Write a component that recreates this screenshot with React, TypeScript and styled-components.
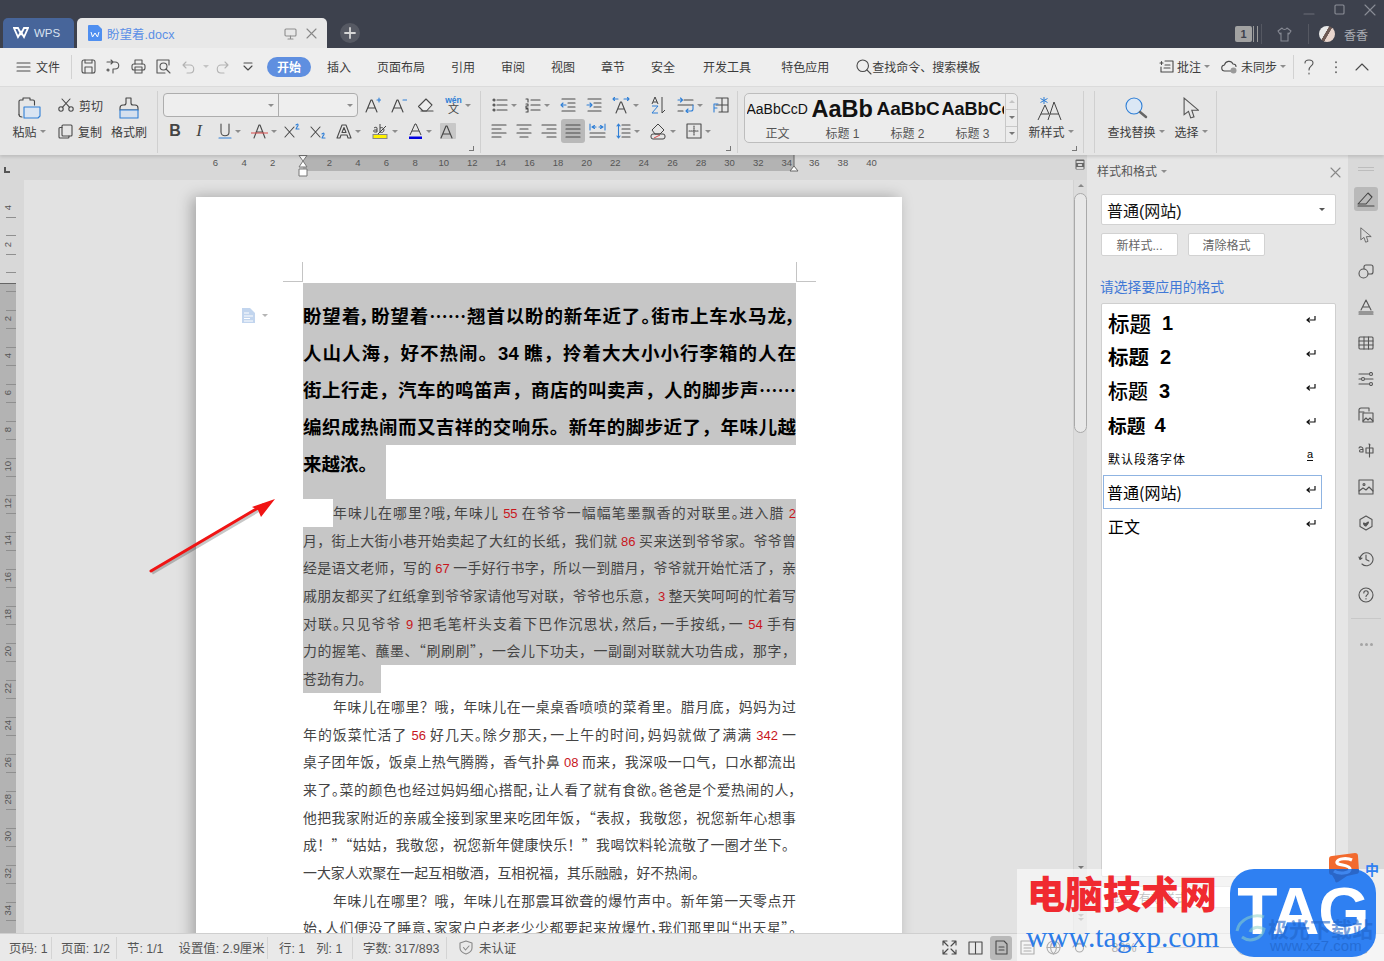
import React from 'react';
import styled, { createGlobalStyle } from 'styled-components';

const GlobalStyle = createGlobalStyle`
    html, body {
        margin: 0;
        padding: 0;
        background: #e2e2e2;
        font-family: "Liberation Sans", "Noto Sans CJK SC", sans-serif;
    }
    * { box-sizing: border-box; }
    svg { display: block; flex: none; }
`;

const Shell = styled.div`
    position: relative;
    width: 1384px;
    height: 961px;
    overflow: hidden;
    display: flex;
    flex-direction: column;
    color: #3a3a3a;
`;

/* ---------- title bar ---------- */
const TitleBar = styled.div`
    height: 48px;
    flex: none;
    background: #3d414d;
    display: flex;
    align-items: flex-end;
    padding-left: 3px;
`;
const WpsTab = styled.div`
    width: 71px;
    height: 30px;
    margin-right: 3px;
    border-radius: 5px 5px 0 0;
    background: #47659a;
    color: #d9e2f0;
    font-size: 11.5px;
    display: flex;
    align-items: center;
    gap: 5px;
    padding-left: 10px;
`;
const DocTab = styled.div`
    width: 250px;
    height: 30px;
    border-radius: 5px 5px 0 0;
    background: #e8e8e8;
    display: flex;
    align-items: center;
    padding: 0 10px 0 11px;
    color: #5a8fe6;
    font-size: 12.5px;
    gap: 5px;
`;
const DocTabName = styled.span`
    flex: 1;
`;
const TabCloseSlot = styled.div`
    margin-left: 4px;
`;
const NewTab = styled.div`
    width: 20px;
    height: 20px;
    margin: 0 0 5px 13px;
    border-radius: 50%;
    background: #565963;
    display: flex;
    align-items: center;
    justify-content: center;
`;
const TitleRight = styled.div`
    margin-left: auto;
    height: 48px;
    display: flex;
    flex-direction: column;
    align-items: flex-end;
`;
const WindowControls = styled.div`
    display: flex;
    align-items: center;
    gap: 19px;
    height: 18px;
    padding: 1px 8px 0 0;
    margin-bottom: 6px;
`;
const UserRow = styled.div`
    display: flex;
    align-items: center;
    height: 20px;
    padding-right: 16px;
    color: #a8abb2;
    font-size: 12px;
`;
const CountBadge = styled.div`
    width: 17px;
    height: 16px;
    border-radius: 2px;
    background: #a2a2a2;
    color: #3d414d;
    font-size: 11px;
    font-weight: 700;
    display: flex;
    align-items: center;
    justify-content: center;
    margin-right: 1px;
`;
const BadgeStripes = styled.div`
    width: 5px;
    height: 16px;
    border-left: 1px solid #9a9a9a;
    border-right: 1px solid #9a9a9a;
    margin-right: 3px;
`;
const TitleDivider = styled.div`
    width: 1px;
    height: 20px;
    background: #555862;
`;
const ShirtSlot = styled.div`
    width: 46px;
    display: flex;
    justify-content: center;
`;
const Avatar = styled.div`
    width: 16px;
    height: 16px;
    border-radius: 50%;
    margin: 0 9px 0 10px;
    background: linear-gradient(120deg, #e9e9e9 40%, #6d5a55 42%, #6d5a55 55%, #e8d5cd 57%);
`;

/* ---------- menu bar ---------- */
const MenuBar = styled.div`
    height: 39px;
    flex: none;
    background: #eeeeee;
    border-bottom: 1px solid #dcdcdc;
    display: flex;
    align-items: center;
    padding: 0 0 1px 16px;
    font-size: 12px;
    color: #3c3c3c;
`;
const FileButton = styled.div`
    display: flex;
    align-items: center;
    gap: 5px;
    width: 55px;
`;
const MenuDivider = styled.div`
    width: 1px;
    height: 24px;
    background: #d2d2d2;
`;
const QuickTools = styled.div`
    display: flex;
    align-items: center;
    width: 195px;
    padding-left: 4px;
`;
const QuickCell = styled.div<{ $w?: number }>`
    width: ${(p) => p.$w ?? 25}px;
    display: flex;
    justify-content: center;
`;
const ActivePill = styled.div`
    width: 44px;
    height: 20px;
    border-radius: 10px;
    background: #5f8fe0;
    color: #fff;
    font-weight: 700;
    display: flex;
    align-items: center;
    justify-content: center;
    margin-right: 16px;
`;
const MenuItem = styled.div<{ $gap?: number }>`
    margin-right: ${(p) => p.$gap ?? 26}px;
`;
const SearchHint = styled.div`
    display: flex;
    align-items: center;
    gap: 0;
`;
const MenuRight = styled.div`
    margin-left: auto;
    display: flex;
    align-items: center;
    padding-right: 8px;
`;
const MenuAction = styled.div<{ $w: number }>`
    width: ${(p) => p.$w}px;
    display: flex;
    align-items: center;
    gap: 3px;
`;
const CollapseSlot = styled.div<{ $w: number }>`
    width: ${(p) => p.$w}px;
    display: flex;
    justify-content: center;
`;

/* ---------- ribbon ---------- */
const Ribbon = styled.div`
    height: 68px;
    flex: none;
    background: #e6e6e6;
    display: flex;
    position: relative;
    z-index: 2;
    box-shadow: 0 2px 3px rgba(0, 0, 0, 0.12);
    font-size: 12px;
    color: #3c3c3c;
`;
const RibbonGroup = styled.div<{ $w: number; $pad?: number }>`
    position: relative;
    width: ${(p) => p.$w}px;
    margin: 4px 0 2px;
    padding-left: ${(p) => p.$pad ?? 0}px;
    border-right: 1px solid #d0d0d0;
    display: flex;
    flex: none;
`;
const GroupStack = styled.div`
    display: flex;
    flex-direction: column;
    gap: 2px;
    padding-top: 2px;
`;
const GroupCorner = styled.div`
    position: absolute;
    right: 6px;
    bottom: 2px;
    width: 5px;
    height: 5px;
    border-right: 1px solid #777;
    border-bottom: 1px solid #777;
`;
const ToolRow = styled.div`
    display: flex;
    align-items: center;
    height: 24px;
`;
const Tool = styled.div<{ $w: number; $active?: boolean }>`
    width: ${(p) => p.$w}px;
    height: 24px;
    display: flex;
    align-items: center;
    justify-content: center;
    gap: 3px;
    flex: none;
    border-radius: 3px;
    background: ${(p) => (p.$active ? '#b9b9b9' : 'transparent')};
`;
const ShadedBox = styled.div`
    width: 16px;
    height: 16px;
    background: #c8c8c8;
    border-radius: 1px;
`;
const Caret = styled.span<{ $color?: string }>`
    width: 0;
    height: 0;
    flex: none;
    border-left: 3px solid transparent;
    border-right: 3px solid transparent;
    border-top: 3px solid ${(p) => p.$color ?? '#8d8d8d'};
`;
const BigTool = styled.div<{ $w: number; $ml?: number }>`
    width: ${(p) => p.$w}px;
    margin-left: ${(p) => p.$ml ?? 0}px;
    display: flex;
    flex-direction: column;
    align-items: center;
    flex: none;
    padding-top: 6px;
    height: 60px;
`;
const BigLabel = styled.div`
    margin-top: auto;
    padding-bottom: 11px;
    display: flex;
    align-items: center;
    gap: 3px;
    white-space: nowrap;
`;
const ClipColumn = styled.div`
    display: flex;
    flex-direction: column;
    margin-left: 10px;
    width: 48px;
    padding-top: 1px;
`;
const ClipItem = styled.div`
    height: 26px;
    display: flex;
    align-items: center;
    gap: 5px;
`;
const FontBox = styled.div`
    width: 195px;
    height: 24px;
    margin-right: 2px;
    border: 1px solid #adadad;
    border-radius: 4px;
    background: #eeeeee;
    display: flex;
`;
const FontPart = styled.div<{ $w: number }>`
    width: ${(p) => p.$w}px;
    display: flex;
    align-items: center;
    justify-content: flex-end;
    padding-right: 4px;
    border-right: 1px solid #adadad;
    &:last-child { border-right: none; }
`;
const BoldMark = styled.span`
    font-size: 16px;
    font-weight: 700;
    color: #444;
`;
const ItalicMark = styled.span`
    font-family: "Liberation Serif", serif;
    font-size: 17px;
    font-style: italic;
    color: #444;
`;
const PinyinStack = styled.div`
    display: flex;
    flex-direction: column;
    align-items: center;
    width: 16px;
`;
const PinyinTop = styled.span`
    font-size: 8.5px;
    line-height: 8px;
    font-weight: 700;
    color: #2f7fd6;
`;
const PinyinChar = styled.span`
    font-size: 11px;
    line-height: 11px;
    color: #444;
`;
const Gallery = styled.div`
    width: 274px;
    height: 50px;
    margin: 2px 0 0 6px;
    border: 1px solid #bdbdbd;
    border-radius: 5px;
    background: #ececec;
    display: flex;
`;
const GalleryCell = styled.div`
    width: 65px;
    flex: none;
    display: flex;
    flex-direction: column;
    align-items: center;
    overflow: hidden;
`;
const GalleryPreview = styled.div<{ $size: number; $bold?: boolean }>`
    height: 30px;
    width: 62px;
    overflow: hidden;
    display: flex;
    align-items: center;
    white-space: nowrap;
    color: #111;
    font-size: ${(p) => p.$size}px;
    font-weight: ${(p) => (p.$bold ? 700 : 400)};
`;
const GalleryName = styled.div`
    font-size: 12px;
    color: #555;
`;
const GalleryScroll = styled.div`
    width: 12px;
    margin-left: auto;
    border-left: 1px solid #c8c8c8;
    display: flex;
    flex-direction: column;
`;
const GalleryArrow = styled.div`
    flex: 1;
    display: flex;
    align-items: center;
    justify-content: center;
    border-bottom: 1px solid #c8c8c8;
    &:last-child { border-bottom: none; }
`;

/* ---------- work area ---------- */
const Workspace = styled.div`
    flex: 1;
    min-height: 0;
    display: flex;
`;
const EditorPane = styled.div`
    width: 1087px;
    flex: none;
    display: flex;
    flex-direction: column;
`;
const HRuler = styled.div`
    height: 25px;
    flex: none;
    background: #d8d8d8;
    display: flex;
    font-size: 9.5px;
    color: #555;
`;
const RulerLead = styled.div`
    width: 303px;
    height: 16px;
    padding-right: 16px;
    display: flex;
    justify-content: flex-end;
    position: relative;
`;
const RulerBand = styled.div`
    width: 491px;
    height: 16px;
    padding-left: 12px;
    background: #b3b3b3;
    display: flex;
    position: relative;
`;
const RulerTail = styled.div`
    flex: 1;
    height: 16px;
    padding-left: 6px;
    display: flex;
`;
const RulerCell = styled.span`
    width: 28.6px;
    flex: none;
    line-height: 16px;
    text-align: center;
`;
const TabStop = styled.div`
    position: absolute;
    left: 4px;
    top: 12px;
    width: 6px;
    height: 6px;
    border-left: 2px solid #555;
    border-bottom: 2px solid #555;
`;
const IndentMarker = styled.div`
    position: absolute;
    left: -6px;
    top: 0;
`;
const RightMarker = styled.div`
    position: absolute;
    right: -5px;
    top: 0;
`;
const RulerToggle = styled.div`
    width: 14px;
    flex: none;
    padding: 4px 0 0 2px;
`;
const EditorMain = styled.div`
    flex: 1;
    min-height: 0;
    display: flex;
`;
const VRuler = styled.div`
    width: 24px;
    flex: none;
    background: #d8d8d8;
    display: flex;
    flex-direction: column;
    overflow: hidden;
    font-size: 9.5px;
    color: #555;
`;
const VRulerTop = styled.div`
    width: 16px;
    height: 103px;
    flex: none;
    padding-top: 18px;
`;
const VRulerBottom = styled.div`
    width: 16px;
    flex: 1;
    background: #b3b3b3;
    border-top: 1px solid #666;
    padding-top: 7px;
`;
const VSlot = styled.div<{ $h?: number }>`
    position: relative;
    height: ${(p) => p.$h ?? 18.5}px;
    display: flex;
    align-items: center;
    justify-content: center;
    &::before {
        content: '';
        position: absolute;
        top: 0;
        left: 6px;
        width: 10px;
        height: 1px;
        background: ${(p) => (p.$h ? 'transparent' : '#8f8f8f')};
    }
`;
const VNumber = styled.span`
    writing-mode: vertical-rl;
    transform: rotate(180deg);
    line-height: 10px;
`;
const DocArea = styled.div`
    flex: 1;
    min-width: 0;
    background: #e2e2e2;
    padding: 17px 0 0 172px;
    overflow: hidden;
`;
const Page = styled.div`
    position: relative;
    width: 706px;
    min-height: 800px;
    padding: 86px 106px 0 107px;
    background: #fff;
    box-shadow: -4px 0 14px rgba(0, 0, 0, 0.28);
    font-family: "Noto Sans CJK SC", "Liberation Sans", sans-serif;
`;
const CropMark = styled.div<{ $side: 'left' | 'right' }>`
    position: absolute;
    top: 65px;
    ${(p) => (p.$side === 'left' ? 'left: 106px;' : 'right: 105px;')}
    width: 1px;
    height: 20px;
    background: #c4c4c4;
    &::after {
        content: '';
        position: absolute;
        bottom: 0;
        ${(p) => (p.$side === 'left' ? 'right: 0;' : 'left: 0;')}
        width: 20px;
        height: 1px;
        background: #c4c4c4;
    }
`;
const MarginIcon = styled.div`
    position: absolute;
    left: 46px;
    top: 111px;
    display: flex;
    align-items: center;
    gap: 7px;
`;
const HeadingBlock = styled.div`
    background: #c6c6c6;
    padding-top: 13.5px;
`;
const HeadingLine = styled.div<{ $compact?: boolean }>`
    height: 37px;
    line-height: 37px;
    font-size: 18.5px;
    font-weight: 700;
    color: #000;
    text-align: justify;
    text-align-last: justify;
    font-feature-settings: ${(p) => (p.$compact ? '"palt"' : 'normal')};
    overflow: hidden;
`;
const HeadingTail = styled(HeadingLine)`
    width: 83px;
    height: 54.5px;
    background: #c6c6c6;
    text-align-last: left;
`;
const HeadingNumber = styled.span`
    font-family: "Liberation Sans", sans-serif;
`;
const BodyLine = styled.div<{ $selected?: boolean; $first?: boolean; $last?: boolean; $compact?: boolean }>`
    height: 27.7px;
    line-height: 26px;
    padding-bottom: 1.7px;
    font-size: 13.9px;
    color: #444;
    overflow: hidden;
    text-align: justify;
    text-align-last: ${(p) => (p.$last ? 'left' : 'justify')};
    font-feature-settings: ${(p) => (p.$compact ? '"palt"' : 'normal')};
    padding-left: ${(p) => (p.$first ? 30 : 0)}px;
    padding-right: ${(p) => (p.$last && p.$selected ? 9 : 0)}px;
    width: ${(p) => (p.$last && p.$selected ? 'fit-content' : 'auto')};
    background: ${(p) => (p.$selected ? '#c6c6c6' : 'transparent')};
    background-clip: ${(p) => (p.$first ? 'padding-box' : 'border-box')};
    box-shadow: ${(p) => (p.$first && p.$selected ? 'inset 30px 0 0 #fff' : 'none')};
`;
const RedNumber = styled.span`
    color: #c8161d;
    font-family: "Liberation Sans", sans-serif;
    font-size: 13px;
`;
const Scrollbar = styled.div`
    width: 14px;
    flex: none;
    background: #dcdcdc;
    display: flex;
    flex-direction: column;
    align-items: center;
    padding-top: 4px;
    border-left: 1px solid #d2d2d2;
`;
const ScrollThumb = styled.div`
    width: 13px;
    height: 240px;
    margin-top: 6px;
    border: 1px solid #a9a9a9;
    border-radius: 7px;
    background: #e8e8e8;
`;
const ScrollArrow = styled(Caret)<{ $up?: boolean }>`
    display: block;
    transform: ${(p) => (p.$up ? 'rotate(180deg)' : 'none')};
    margin-bottom: ${(p) => (p.$up ? 0 : 1)}px;
`;
const ScrollBottom = styled.div`
    margin-top: auto;
    padding-bottom: 11px;
    display: flex;
    flex-direction: column;
    align-items: center;
`;
const ScrollGap = styled.div`
    height: 44px;
`;

/* ---------- styles panel ---------- */
const SidePanel = styled.div`
    width: 261px;
    flex: none;
    background: #e6e6e6;
    padding: 0 12px 0 14px;
    display: flex;
    flex-direction: column;
    font-size: 12px;
`;
const PanelHead = styled.div`
    height: 39px;
    padding-top: 9px;
    margin-left: -4px;
    display: flex;
    align-items: flex-start;
    gap: 4px;
    color: #555;
`;
const PanelTitle = styled.div`
    line-height: 16px;
`;
const PanelCaret = styled(Caret)`
    margin-top: 6px;
`;
const PanelClose = styled.div`
    margin: 3px -5px 0 auto;
`;
const StyleSelect = styled.div`
    height: 31px;
    flex: none;
    background: #fff;
    border: 1px solid #d2d2d2;
    border-radius: 2px;
    display: flex;
    align-items: center;
    justify-content: space-between;
    padding: 0 10px 0 5px;
    font-size: 16px;
    color: #111;
`;
const PanelButtons = styled.div`
    display: flex;
    gap: 10px;
    margin-top: 8px;
`;
const PanelButton = styled.div`
    width: 77px;
    height: 23px;
    background: #fff;
    border: 1px solid #d2d2d2;
    border-radius: 2px;
    display: flex;
    align-items: center;
    justify-content: center;
    color: #666;
`;
const PanelLink = styled.div`
    margin: 23px 0 0 -1px;
    height: 17px;
    line-height: 17px;
    font-size: 13.8px;
    color: #3f78d6;
    white-space: nowrap;
`;
const StyleList = styled.div`
    margin-top: 7px;
    height: 574px;
    flex: none;
    background: #fff;
    border: 1px solid #cfcfcf;
    border-radius: 2px;
    padding: 1px 0 0 1px;
`;
const StyleRow = styled.div<{ $selected?: boolean }>`
    width: 219px;
    height: 34px;
    padding: 0 5px 0 ${(p) => (p.$selected ? 3 : 4)}px;
    display: flex;
    align-items: center;
    border: 1px solid ${(p) => (p.$selected ? '#8fb4e2' : 'transparent')};
    color: #000;
`;
const StyleName = styled.span<{ $size: number; $bold?: boolean; $spaced?: boolean }>`
    font-family: "Noto Sans CJK SC", sans-serif;
    font-size: ${(p) => p.$size}px;
    font-weight: ${(p) => (p.$bold ? 700 : 500)};
    letter-spacing: ${(p) => (p.$spaced ? '1px' : '0')};
    white-space: pre;
`;
const PlainName = styled(StyleName)`
    font-weight: 400;
`;
const StyleDigit = styled.span<{ $gap: number }>`
    margin: 3px 0 0 ${(p) => p.$gap}px;
    font-size: 20px;
    font-weight: 700;
`;
const ParaMark = styled.div`
    margin-left: auto;
    align-self: flex-start;
    margin-top: 10px;
`;
const CharMark = styled.span`
    margin-left: auto;
    align-self: flex-start;
    margin-top: 7px;
    margin-right: 3px;
    font-size: 11px;
    line-height: 11px;
    border-bottom: 1px solid #111;
`;
const ShowSelect = styled.div`
    height: 22px;
    margin-top: 9px;
    background: #fff;
    border: 1px solid #d8d8d8;
    padding-left: 6px;
    display: flex;
    align-items: center;
    color: #777;
`;
const Rail = styled.div`
    width: 36px;
    flex: none;
    background: #d9d9d9;
    display: flex;
    flex-direction: column;
    align-items: center;
    padding-top: 12px;
`;
const RailGrip = styled.div`
    width: 16px;
    height: 4px;
    border-top: 1px solid #bdbdbd;
    border-bottom: 1px solid #bdbdbd;
    margin-bottom: 16px;
`;
const RailButton = styled.div<{ $active?: boolean }>`
    width: 24px;
    height: 24px;
    margin-bottom: 12px;
    border-radius: 3px;
    display: flex;
    align-items: center;
    justify-content: center;
    background: ${(p) => (p.$active ? '#b9b9b9' : 'transparent')};
    color: #555;
`;
const RailRule = styled.div`
    width: 30px;
    height: 1px;
    background: #c8c8c8;
    margin: -1px 0 24px;
`;
const RailDots = styled.div`
    display: flex;
    gap: 2px;
`;
const RailDot = styled.span`
    width: 3px;
    height: 3px;
    border-radius: 50%;
    background: #a4a4a4;
`;

/* ---------- status bar ---------- */
const StatusBar = styled.div`
    height: 28px;
    flex: none;
    background: #e9e9e9;
    border-top: 1px solid #cfcfcf;
    display: flex;
    align-items: center;
    font-size: 12.4px;
    color: #555;
    position: relative;
    z-index: 2;
`;
const StatusCell = styled.div<{ $w: number; $ruled?: boolean; $gap?: number; $pad?: number }>`
    width: ${(p) => p.$w}px;
    height: 22px;
    display: flex;
    align-items: center;
    gap: ${(p) => p.$gap ?? 15}px;
    padding-left: ${(p) => p.$pad ?? 9}px;
    white-space: nowrap;
    border-right: 1px solid ${(p) => (p.$ruled === false ? 'transparent' : '#d4d4d4')};
`;
const StatusTools = styled.div`
    margin-left: auto;
    display: flex;
    align-items: center;
    padding-right: 11px;
    gap: 4px;
`;
const ViewButton = styled.div<{ $active?: boolean }>`
    width: 22px;
    height: 24px;
    border-radius: 3px;
    display: flex;
    align-items: center;
    justify-content: center;
    background: ${(p) => (p.$active ? '#b9b9b9' : 'transparent')};
`;
const ZoomValue = styled.div`
    width: 40px;
    margin-left: 10px;
    text-align: center;
`;
const ZoomTrack = styled.div`
    position: relative;
    width: 177px;
    height: 1px;
    margin: 0 3px;
    background: #aaa;
    &::after {
        content: '';
        position: absolute;
        left: 86px;
        top: -5px;
        width: 11px;
        height: 11px;
        border: 1px solid #777;
        border-radius: 50%;
        background: #eee;
    }
`;

/* ---------- overlays ---------- */
const ArrowOverlay = styled.div`
    position: absolute;
    left: 145px;
    top: 492px;
    z-index: 5;
`;
const Watermark = styled.div`
    position: absolute;
    left: 1017px;
    top: 869px;
    width: 367px;
    height: 92px;
    z-index: 5;
    background: rgba(255, 255, 255, 0.55);
`;
const WatermarkTitle = styled.div`
    position: absolute;
    left: 10px;
    top: -3px;
    font-family: "Noto Sans CJK SC", sans-serif;
    font-size: 38px;
    line-height: 52px;
    font-weight: 900;
    color: #f02a30;
    white-space: nowrap;
`;
const WatermarkUrl = styled.div`
    position: absolute;
    left: 9px;
    top: 50px;
    font-family: "Liberation Serif", serif;
    font-size: 29.5px;
    line-height: 36px;
    color: #2d7ce8;
    white-space: nowrap;
`;
const TagBox = styled.div`
    position: absolute;
    left: 213px;
    top: 0;
    width: 146px;
    height: 88px;
    border-radius: 24px;
    background: #2f80f2;
    color: #fff;
    font-family: "Liberation Sans", sans-serif;
    font-size: 66px;
    font-weight: 700;
    line-height: 84px;
    text-align: center;
    letter-spacing: -1px;
    overflow: hidden;
`;
const TagCaption = styled.div`
    position: absolute;
    left: 38px;
    top: 46px;
    font-family: "Noto Sans CJK SC", sans-serif;
    font-size: 21px;
    line-height: 26px;
    font-weight: 700;
    letter-spacing: 0;
    color: rgba(32, 100, 200, 0.6);
    white-space: nowrap;
`;
const TagSite = styled.div`
    position: absolute;
    left: 40px;
    top: 68px;
    font-size: 15px;
    line-height: 18px;
    font-weight: 400;
    letter-spacing: 0;
    color: rgba(32, 100, 200, 0.7);
    white-space: nowrap;
`;
const TagSwirl = styled.div`
    position: absolute;
    left: 4px;
    top: 42px;
`;
const SogouMark = styled.div`
    position: absolute;
    left: 1326px;
    top: 853px;
    z-index: 6;
`;
const ImeLabel = styled.div`
    position: absolute;
    left: 1365px;
    top: 860px;
    z-index: 6;
    font-family: "Noto Sans CJK SC", sans-serif;
    font-size: 14px;
    line-height: 18px;
    font-weight: 700;
    color: #2f80f2;
`;

/* ---------- drawings ---------- */
type IcoProps = { w?: number; h?: number; c?: string; sw?: number; children: React.ReactNode };
const Ico = ({ w = 18, h = 18, c = '#4a4a4a', sw = 1.1, children }: IcoProps) => (
    <svg width={w} height={h} viewBox={`0 0 ${w} ${h}`} fill="none" stroke={c} strokeWidth={sw} strokeLinecap="round" strokeLinejoin="round">
        {children}
    </svg>
);
const Blue = '#2f7fd6';

const Lines = ({ rows }: { rows: [number, number, number][] }) => (
    <>{rows.map(([x1, x2, y], i) => <path key={i} d={`M${x1} ${y}H${x2}`} />)}</>
);

const IconBullets = () => (
    <Ico w={16} h={16}><circle cx="2" cy="3" r="1" /><circle cx="2" cy="8" r="1" /><circle cx="2" cy="13" r="1" /><Lines rows={[[5, 15, 3], [5, 15, 8], [5, 15, 13]]} /></Ico>
);
const IconNumbers = () => (
    <Ico w={16} h={16}><path d="M1 2h2v3M1 7h2v2H1v2h2M1 12h2v3H1" /><Lines rows={[[6, 15, 3], [6, 15, 8], [6, 15, 13]]} /></Ico>
);
const IconIndent = ({ out }: { out?: boolean }) => (
    <Ico w={16} h={16}><Lines rows={[[2, 15, 2], [8, 15, 6], [8, 15, 10], [2, 15, 14]]} /><g stroke={Blue}><path d={out ? 'M6 8H1M3 6L1 8l2 2' : 'M1 8h5M4 6l2 2-2 2'} /></g></Ico>
);
const IconAlign = ({ rows }: { rows: [number, number, number][] }) => (
    <Ico w={16} h={16}><Lines rows={rows} /></Ico>
);

const IconPaste = () => (
    <Ico w={23} h={22} c="#444">
        <path d="M1 17.500V4.500A1.500 1.500 0 0 1 2.500 3H5V1h7v2h3a1.500 1.500 0 0 1 1.500 1.500V8" />
        <path d="M1 17.500c0 1.500 1 2.500 3 2.500" />
        <path d="M6 10h16v9l-2 2H6z" fill="#d9e4f2" stroke={Blue} />
    </Ico>
);
const IconScissors = () => (
    <Ico w={16} h={14}><circle cx="3" cy="11" r="2.2" /><circle cx="13" cy="11" r="2.2" /><path d="M4.400 9.400L12 1M11.600 9.400L4 1" /></Ico>
);
const IconCopy = () => (
    <Ico w={15} h={15}><rect x="4" y="1" width="10" height="11" rx="1" /><path d="M4 3.500H2a1 1 0 0 0-1 1V13a1 1 0 0 0 1 1h8a1 1 0 0 0 1-1v-1" /></Ico>
);
const IconBrush = () => (
    <Ico w={22} h={22} c="#444">
        <path d="M8 1h5v5c0 1 1 2 2 2h2c2 0 3 1 3 3v2H2v-2c0-2 1-3 3-3h1c1 0 2-1 2-2z" />
        <rect x="2" y="13" width="18" height="8" fill="#d5e0ee" stroke={Blue} />
    </Ico>
);
const IconFontA = ({ sub, c = '#444' }: { sub?: React.ReactNode; c?: string }) => (
    <Ico w={16} h={16} c={c}><path d="M1 15L6 3h1l5 12M3 11h7" />{sub}</Ico>
);
const IconEraser = () => (
    <Ico w={17} h={16}><path d="M6 14L1.500 9.500 9 2l6 6-5.500 6z" fill="#eee" /><path d="M4 14h12" /></Ico>
);
const IconUnderline = () => (
    <Ico w={14} h={16}><path d="M3 1v8c0 5 8 5 8 0V1" /><path d="M1 15h12" stroke={Blue} /></Ico>
);
const IconStrike = () => (
    <Ico w={17} h={16}><path d="M3 15L8 2h1l5 13M5 9h7" /><path d="M0 10h17" stroke="#d84a4a" /></Ico>
);
const IconSup = ({ sub }: { sub?: boolean }) => (
    <Ico w={17} h={16}><path d="M1 4l9 10M10 4L1 14" /><path d={sub ? 'M12 11c2-2 3 0 1 2l-1 2h3' : 'M12 2c2-2 3 0 1 2l-1 2h3'} stroke={Blue} /></Ico>
);
const IconOutlineA = () => (
    <Ico w={16} h={16}><path d="M1 15L6 2h4l5 13h-3l-1-3H5l-1 3zM6 9.500h4L8 4.500z" /></Ico>
);
const IconHighlight = () => (
    <svg width="17" height="17" viewBox="0 0 17 17" fill="none" stroke="#444">
        <path d="M2 5c1-1 3-1 3 0v4H3c-2 0-2-2 0-2h2M8 1v8c2 1 4 0 4-2s-2-3-4-2" />
        <path d="M6 11L14 3" />
        <rect x="1" y="11.500" width="14" height="4" fill="#fff200" stroke="#888" />
    </svg>
);
const IconColorA = () => (
    <svg width="15" height="17" viewBox="0 0 15 17" fill="none" stroke="#444">
        <path d="M2 12L7 1h1l5 11M4 8h7" />
        <rect x="1" y="13.500" width="13" height="2.500" fill="#0000e0" stroke="none" />
    </svg>
);
const IconTextDir = () => (
    <Ico w={18} h={18}><path d="M4 17L8.500 6h1L14 17M6 13h6" /><g stroke={Blue}><path d="M1 3h5M2.500 1.500L1 3l1.500 1.500M12 3h5M15.500 1.500L17 3l-1.500 1.500" /></g></Ico>
);
const IconSort = () => (
    <svg width="15" height="18" viewBox="0 0 15 18" fill="none" strokeWidth="1">
        <path d="M1 8l3-7 3 7M2 6h4" stroke="#444" />
        <path d="M1 10h6l-6 7h6" stroke={Blue} />
        <path d="M11 1v16M11 17l3-3" stroke="#444" />
    </svg>
);
const IconWrap = () => (
    <Ico w={17} h={16}><path d="M7 3h9M1 8h15M1 14h5" /><g stroke={Blue}><path d="M1 3h4M3.500 1L5.500 3 3.500 5M16 8v4a2 2 0 0 1-2 2H9M11 12l-2 2 2 2" /></g></Ico>
);
const IconTableLeft = () => (
    <Ico w={16} h={16}><path d="M3 1h12v14H6M9 1v14M3 8h12" /><path d="M1 7v8M1 7h4M1 11h3" stroke={Blue} /></Ico>
);
const IconSpread = () => (
    <Ico w={17} h={16}><path d="M1 10h15M1 14h15" /><g stroke={Blue}><path d="M1 1v6M16 1v6M3 4h4M5.500 2.500L3 4l2.500 1.500M10 4h4M11.500 2.500L14 4l-2.500 1.500" /></g></Ico>
);
const IconLineHeight = () => (
    <Ico w={15} h={16}><Lines rows={[[6, 14, 2], [6, 14, 6], [6, 14, 10], [6, 14, 14]]} /><path d="M2.500 1v14M1 3l1.500-2L4 3M1 13l1.500 2L4 13" stroke={Blue} /></Ico>
);
const IconFill = () => (
    <svg width="17" height="18" viewBox="0 0 17 18" fill="none" stroke="#444">
        <path d="M2 8l6-6 6 6-4 4H5z" />
        <rect x="1" y="12" width="14" height="5" rx="2" />
        <path d="M4 16l6-3" stroke="#d84a4a" />
    </svg>
);
const IconBorders = () => (
    <Ico w={16} h={16}><rect x="1" y="1" width="14" height="14" /><path d="M8 3v10M3 8h10" strokeDasharray="1 1" /></Ico>
);
const IconNewStyle = () => (
    <svg width="28" height="24" viewBox="0 0 28 24" fill="none" stroke="#444">
        <path d="M1 23L8 8l4 9M4 17h8M11 23l6-18 7 18M13 17h9" />
        <path d="M7 0v7M3.500 1.500l7 4M10.500 1.500l-7 4" stroke={Blue} />
    </svg>
);
const IconFind = () => (
    <Ico w={23} h={22}><circle cx="9" cy="9" r="8" fill="#dbe7f5" stroke={Blue} /><path d="M15 15l6 5" stroke="#666" strokeWidth="2.500" /></Ico>
);
const IconPointer = ({ s = 22 }: { s?: number }) => (
    <svg width={s * 0.75} height={s} viewBox="0 0 15 20" fill="none" stroke="#555">
        <path d="M1 1v15l4-3 2 6 3-1-2-6h6z" />
    </svg>
);
const IconSave = () => (
    <Ico w={15} h={15} c="#555"><rect x="1" y="1" width="13" height="13" rx="2" /><path d="M4 1v3h7V1M4 14V8h7v6" /></Ico>
);
const IconBranch = () => (
    <Ico w={15} h={15} c="#555"><path d="M1 3h6M5 1l2 2-2 2M7 3h2c5 0 5 7 0 7H7v4" /><circle cx="2" cy="11" r="1" /></Ico>
);
const IconPrint = () => (
    <Ico w={15} h={15} c="#555"><path d="M4 5V1h7v4" /><rect x="1" y="5" width="13" height="6" rx="2" /><rect x="4" y="8" width="7" height="6" /></Ico>
);
const IconPreview = () => (
    <Ico w={15} h={15} c="#555"><path d="M13 6V1H1v13h8" /><circle cx="7.500" cy="7.500" r="3.500" /><path d="M10 10l4 4" /></Ico>
);
const IconUndo = ({ redo }: { redo?: boolean }) => (
    <Ico w={13} h={14} c="#b3b3b3">
        <g transform={redo ? 'matrix(-1 0 0 1 13 0)' : undefined}><path d="M4 2L1 5l3 3M1 5h7c5 0 5 8 0 8H5" /></g>
    </Ico>
);
const IconSearch = ({ s = 15 }: { s?: number }) => (
    <Ico w={s} h={s}><circle cx={s * 0.42} cy={s * 0.42} r={s * 0.36} /><path d={`M${s * 0.68} ${s * 0.68}L${s - 1} ${s - 1}`} /></Ico>
);
const IconMore = () => (
    <Ico w={10} h={9}><path d="M1 1h8M1 4l4 4 4-4" /></Ico>
);
const IconComment = () => (
    <Ico w={15} h={15}><path d="M1 4h3M2.500 2.500v3M6 2h8v11H2V8M6 6h5M5 9h6" /></Ico>
);
const IconCloud = () => (
    <Ico w={17} h={14}><path d="M10 11H4a3 3 0 0 1-.5-6 4.500 4.500 0 0 1 8.500-1c1.500 0 3 1 3 2.500" /><circle cx="12.500" cy="10.500" r="3" fill="#9a9a9a" stroke="none" /></Ico>
);
const IconClose = ({ s = 11, c = '#888' }: { s?: number; c?: string }) => (
    <Ico w={s} h={s} c={c}><path d={`M1 1L${s - 1} ${s - 1}M${s - 1} 1L1 ${s - 1}`} /></Ico>
);
const IconChevronUp = () => (
    <Ico w={14} h={8}><path d="M1 7l6-6 6 6" /></Ico>
);
const IconEnter = () => (
    <Ico w={10} h={9} c="#111" sw={1.2}><path d="M9 0v4H1M3.500 2L1 4l2.500 2" /></Ico>
);

const TabLogo = () => (
    <svg width="14" height="16" viewBox="0 0 14 16">
        <path d="M1 0h9l4 4v11a1 1 0 0 1-1 1H1a1 1 0 0 1-1-1V1a1 1 0 0 1 1-1z" fill="#4f8ff0" />
        <path d="M3 7l1.500 5L7 8l2.500 4L11 7" fill="none" stroke="#fff" />
    </svg>
);
const WpsLogo = () => (
    <svg width="16" height="12" viewBox="0 0 16 12" fill="none" stroke="#fff" strokeWidth="1.800">
        <path d="M1 1h4l3 6 3-6h4l-4 9-3-5-3 5z" />
    </svg>
);

const railIcons: React.ReactNode[] = [
    <Ico key="pen" w={18} h={16} c="#444"><path d="M1 13L11 2l4 4-6 7zM1 15h16" /></Ico>,
    <IconPointer key="ptr" s={16} />,
    <Ico key="shape" w={16} h={16} c="#555"><rect x="6" y="2" width="9" height="9" rx="2" /><circle cx="5.500" cy="10.500" r="4.500" fill="#d9d9d9" /></Ico>,
    <Ico key="fontfx" w={16} h={16} c="#555"><path d="M3 11L8 1l5 10M5.500 8h5M1 13h14M1 15h14" /></Ico>,
    <Ico key="table" w={16} h={14} c="#555"><rect x="1" y="1" width="14" height="12" rx="1" /><path d="M1 5h14M1 9h14M6 1v12M10.500 1v12" /></Ico>,
    <Ico key="sliders" w={16} h={14} c="#555"><path d="M1 2h10M1 7h2M7 7h8M1 12h10" /><circle cx="13" cy="2" r="1.500" /><circle cx="5" cy="7" r="1.500" /><circle cx="13" cy="12" r="1.500" /></Ico>,
    <Ico key="files" w={16} h={16} c="#555"><path d="M1 13V3a2 2 0 0 1 2-2h8v3M1 5h5" /><rect x="5" y="6" width="10" height="9" /><path d="M5 14l3-3 2 2 2-2 3 3" /></Ico>,
    <Ico key="trans" w={16} h={16} c="#555"><path d="M1 5c1-2 4-1 4 1v3H3C1 9 1 7 3 6.500h2" /><path d="M8 5h7v5H8zM11.500 2v12M11 1l1 1" /></Ico>,
    <Ico key="img" w={16} h={16} c="#555"><rect x="1" y="1" width="14" height="14" /><circle cx="6" cy="5.500" r="1" /><path d="M1 12l4-3 3 2 3-3 4 4" /></Ico>,
    <Ico key="hex" w={14} h={16} c="#555"><path d="M7 1l6 3.500v7L7 15l-6-3.500v-7z" /><path d="M4.500 8c0 2 2 3 2.500 3 .5-1 2.500-2 2.500-4C8 7 7.500 8 7 9c0-1-1-1-2.500-1z" fill="#555" /></Ico>,
    <Ico key="hist" w={16} h={16} c="#555"><path d="M2 8a6.500 6.500 0 1 1 2 5M1 6l1 2.500L4 7M8 4v4.500l3 1.500" /></Ico>,
    <Ico key="help" w={16} h={16} c="#555"><circle cx="8" cy="8" r="7" /><path d="M5.800 6c0-3 4.400-3 4.400 0 0 1.800-2.200 1.800-2.200 3.500M8 11.500v.5" /></Ico>,
];

/* ---------- data ---------- */
const headingLines = [
    '盼望着，盼望着……翘首以盼的新年近了。街市上车水马龙，',
    '人山人海，好不热闹。34 瞧，拎着大大小小行李箱的人在',
    '街上行走，汽车的鸣笛声，商店的叫卖声，人的脚步声……',
    '编织成热闹而又吉祥的交响乐。新年的脚步近了，年味儿越',
];
const bodyLines = [
    { t: '年味儿在哪里？哦，年味儿 55 在爷爷一幅幅笔墨飘香的对联里。进入腊 2', sel: true, first: true },
    { t: '月，街上大街小巷开始卖起了大红的长纸，我们就 86 买来送到爷爷家。爷爷曾', sel: true },
    { t: '经是语文老师，写的 67 一手好行书字，所以一到腊月，爷爷就开始忙活了，亲', sel: true },
    { t: '戚朋友都买了红纸拿到爷爷家请他写对联，爷爷也乐意，3 整天笑呵呵的忙着写', sel: true },
    { t: '对联。只见爷爷 9 把毛笔杆头支着下巴作沉思状，然后，一手按纸，一 54 手有', sel: true },
    { t: '力的握笔、蘸墨、“刷刷刷”，一会儿下功夫，一副副对联就大功告成，那字，', sel: true },
    { t: '苍劲有力。', sel: true, last: true },
    { t: '年味儿在哪里？哦，年味儿在一桌桌香喷喷的菜肴里。腊月底，妈妈为过', first: true },
    { t: '年的饭菜忙活了 56 好几天。除夕那天，一上午的时间，妈妈就做了满满 342 一' },
    { t: '桌子团年饭，饭桌上热气腾腾，香气扑鼻 08 而来，我深吸一口气，口水都流出' },
    { t: '来了。菜的颜色也经过妈妈细心搭配，让人看了就有食欲。爸爸是个爱热闹的人，' },
    { t: '他把我家附近的亲戚全接到家里来吃团年饭，“表叔，我敬您，祝您新年心想事' },
    { t: '成！”“姑姑，我敬您，祝您新年健康快乐！”我喝饮料轮流敬了一圈才坐下。' },
    { t: '一大家人欢聚在一起互相敬酒，互相祝福，其乐融融，好不热闹。', last: true },
    { t: '年味儿在哪里？哦，年味儿在那震耳欲聋的爆竹声中。新年第一天零点开', first: true },
    { t: '始，人们便没了睡意，家家户户老老少少都要起来放爆竹，我们那里叫“出天星”。' },
];
const splitDigits = (text: string, Wrap: React.ElementType) =>
    text.split(/(\d+)/).map((part, i) => (/^\d+$/.test(part) ? <Wrap key={i}>{part}</Wrap> : part));

// roughly how many full-width characters a line takes, digits and spaces count about half
const lineEms = (text: string) =>
    Array.from(text).reduce((sum, ch) => sum + (/[\d ]/.test(ch) ? 0.55 : 1), 0);

const menuItems: [string, number][] = [
    ['插入', 26], ['页面布局', 26], ['引用', 26], ['审阅', 26], ['视图', 26], ['章节', 26], ['安全', 28], ['开发工具', 30], ['特色应用', 27],
];
const leadNumbers = ['6', '4', '2'];
const bandNumbers = ['2', '4', '6', '8', '10', '12', '14', '16', '18', '20', '22', '24', '26', '28', '30', '32', '34'];
const tailNumbers = ['36', '38', '40'];
const vBottom = ['', '2', '', '4', '', '6', '', '8', '', '10', '', '12', '', '14', '', '16', '', '18', '', '20', '', '22', '', '24', '', '26', '', '28', '', '30', '', '32', '', '34', ''];

const styleRows = [
    { name: '标题', digit: '1', size: 21.5, bold: false, gap: 11 },
    { name: '标题', digit: '2', size: 20.5, bold: true, gap: 11 },
    { name: '标题', digit: '3', size: 20, bold: false, gap: 11 },
    { name: '标题', digit: '4', size: 18.7, bold: true, gap: 9 },
];

export default function App() {
    return (
        <Shell lang="zh-CN">
            <GlobalStyle />
            <TitleBar>
                <WpsTab><WpsLogo />WPS</WpsTab>
                <DocTab>
                    <TabLogo />
                    <DocTabName>盼望着.docx</DocTabName>
                    <Ico w={13} h={13} c="#8d8d8d"><rect x="1" y="2" width="11" height="7" rx="1" /><path d="M6.500 9v2M4 12h5" /></Ico>
                    <TabCloseSlot><IconClose s={11} /></TabCloseSlot>
                </DocTab>
                <NewTab>
                    <Ico w={12} h={12} c="#d6d6d6" sw={1.8}><path d="M6 1v10M1 6h10" /></Ico>
                </NewTab>
                <TitleRight>
                    <WindowControls>
                        <Ico w={12} h={10} c="#6c6f79"><path d="M1 9h10" /></Ico>
                        <Ico w={11} h={11} c="#8b8e97"><rect x="1" y="1" width="9" height="9" rx="1" /></Ico>
                        <IconClose s={12} c="#8b8e97" />
                    </WindowControls>
                    <UserRow>
                        <CountBadge>1</CountBadge>
                        <BadgeStripes />
                        <TitleDivider />
                        <ShirtSlot>
                            <Ico w={15} h={15} c="#868993"><path d="M5 1L1 4l2 3 1-1v8h7V6l1 1 2-3-4-3c-1 2-4 2-5 0z" /></Ico>
                        </ShirtSlot>
                        <TitleDivider />
                        <Avatar />
                        香香
                    </UserRow>
                </TitleRight>
            </TitleBar>

            <MenuBar>
                <FileButton>
                    <Ico w={15} h={12}><path d="M1 2h13M1 6h13M1 10h13" /></Ico>
                    文件
                </FileButton>
                <MenuDivider />
                <QuickTools>
                    <QuickCell><IconSave /></QuickCell>
                    <QuickCell><IconBranch /></QuickCell>
                    <QuickCell><IconPrint /></QuickCell>
                    <QuickCell><IconPreview /></QuickCell>
                    <QuickCell><IconUndo /></QuickCell>
                    <QuickCell $w={9}><Caret $color="#c4c4c4" /></QuickCell>
                    <QuickCell><IconUndo redo /></QuickCell>
                    <QuickCell><IconMore /></QuickCell>
                </QuickTools>
                <ActivePill>开始</ActivePill>
                {menuItems.map(([label, gap]) => <MenuItem key={label} $gap={gap}>{label}</MenuItem>)}
                <SearchHint><IconSearch s={16} />查找命令、搜索模板</SearchHint>
                <MenuRight>
                    <MenuAction $w={62}><IconComment />批注<Caret /></MenuAction>
                    <MenuAction $w={72}><IconCloud />未同步<Caret /></MenuAction>
                    <MenuDivider />
                    <CollapseSlot $w={30}>
                        <Ico w={12} h={16} c="#555"><path d="M2 4c0-4 8-4 8 0 0 3-4 3-4 7M6 14v1" /></Ico>
                    </CollapseSlot>
                    <CollapseSlot $w={24}>
                        <Ico w={4} h={14} c="#555" sw={1.6}><path d="M2 2v.5M2 7v.5M2 12v.5" /></Ico>
                    </CollapseSlot>
                    <CollapseSlot $w={28}><IconChevronUp /></CollapseSlot>
                </MenuRight>
            </MenuBar>

            <Ribbon>
                <RibbonGroup $w={158} $pad={10}>
                    <BigTool $w={38}>
                        <IconPaste />
                        <BigLabel>粘贴<Caret /></BigLabel>
                    </BigTool>
                    <ClipColumn>
                        <ClipItem><IconScissors />剪切</ClipItem>
                        <ClipItem><IconCopy />复制</ClipItem>
                    </ClipColumn>
                    <BigTool $w={38} $ml={4}>
                        <IconBrush />
                        <BigLabel>格式刷</BigLabel>
                    </BigTool>
                </RibbonGroup>

                <RibbonGroup $w={323} $pad={5}>
                    <GroupStack>
                        <ToolRow>
                            <FontBox>
                                <FontPart $w={115}><Caret /></FontPart>
                                <FontPart $w={78}><Caret /></FontPart>
                            </FontBox>
                            <Tool $w={26}><IconFontA c="#444" sub={<path d="M12 3h4M14 1v4" stroke={Blue} />} /></Tool>
                            <Tool $w={26}><IconFontA c="#444" sub={<path d="M12 3h4" stroke={Blue} />} /></Tool>
                            <Tool $w={27}><IconEraser /></Tool>
                            <Tool $w={38}>
                                <PinyinStack>
                                    <PinyinTop>wén</PinyinTop>
                                    <PinyinChar>文</PinyinChar>
                                </PinyinStack>
                                <Caret />
                            </Tool>
                        </ToolRow>
                        <ToolRow>
                            <Tool $w={24}><BoldMark>B</BoldMark></Tool>
                            <Tool $w={24}><ItalicMark>I</ItalicMark></Tool>
                            <Tool $w={36}><IconUnderline /><Caret /></Tool>
                            <Tool $w={33}><IconStrike /><Caret /></Tool>
                            <Tool $w={25}><IconSup /></Tool>
                            <Tool $w={26}><IconSup sub /></Tool>
                            <Tool $w={35}><IconOutlineA /><Caret /></Tool>
                            <Tool $w={37}><IconHighlight /><Caret /></Tool>
                            <Tool $w={33}><IconColorA /><Caret /></Tool>
                            <Tool $w={24}><ShadedBox><IconFontA /></ShadedBox></Tool>
                        </ToolRow>
                    </GroupStack>
                    <GroupCorner />
                </RibbonGroup>

                <RibbonGroup $w={257} $pad={6}>
                    <GroupStack>
                        <ToolRow>
                            <Tool $w={34}><IconBullets /><Caret /></Tool>
                            <Tool $w={33}><IconNumbers /><Caret /></Tool>
                            <Tool $w={28}><IconIndent out /></Tool>
                            <Tool $w={24}><IconIndent /></Tool>
                            <Tool $w={39}><IconTextDir /><Caret /></Tool>
                            <Tool $w={27}><IconSort /></Tool>
                            <Tool $w={36}><IconWrap /><Caret /></Tool>
                            <Tool $w={25}><IconTableLeft /></Tool>
                        </ToolRow>
                        <ToolRow>
                            <Tool $w={24}><IconAlign rows={[[1, 15, 2], [1, 10, 6], [1, 15, 10], [1, 10, 14]]} /></Tool>
                            <Tool $w={25}><IconAlign rows={[[1, 15, 2], [4, 12, 6], [1, 15, 10], [4, 12, 14]]} /></Tool>
                            <Tool $w={25}><IconAlign rows={[[1, 15, 2], [6, 15, 6], [1, 15, 10], [6, 15, 14]]} /></Tool>
                            <Tool $w={24} $active><IconAlign rows={[[1, 15, 2], [1, 15, 6], [1, 15, 10], [1, 15, 14]]} /></Tool>
                            <Tool $w={25}><IconSpread /></Tool>
                            <Tool $w={35}><IconLineHeight /><Caret /></Tool>
                            <Tool $w={35}><IconFill /><Caret /></Tool>
                            <Tool $w={36}><IconBorders /><Caret /></Tool>
                        </ToolRow>
                    </GroupStack>
                    <GroupCorner />
                </RibbonGroup>

                <RibbonGroup $w={346}>
                    <Gallery>
                        <GalleryCell>
                            <GalleryPreview $size={14}>AaBbCcD</GalleryPreview>
                            <GalleryName>正文</GalleryName>
                        </GalleryCell>
                        <GalleryCell>
                            <GalleryPreview $size={23.5} $bold>AaBb</GalleryPreview>
                            <GalleryName>标题 1</GalleryName>
                        </GalleryCell>
                        <GalleryCell>
                            <GalleryPreview $size={19} $bold>AaBbC</GalleryPreview>
                            <GalleryName>标题 2</GalleryName>
                        </GalleryCell>
                        <GalleryCell>
                            <GalleryPreview $size={18} $bold>AaBbCc</GalleryPreview>
                            <GalleryName>标题 3</GalleryName>
                        </GalleryCell>
                        <GalleryScroll>
                            <GalleryArrow><ScrollArrow $up $color="#c4c4c4" /></GalleryArrow>
                            <GalleryArrow><ScrollArrow $color="#777" /></GalleryArrow>
                            <GalleryArrow><ScrollArrow $color="#777" /></GalleryArrow>
                        </GalleryScroll>
                    </Gallery>
                    <BigTool $w={52} $ml={7}>
                        <IconNewStyle />
                        <BigLabel>新样式<Caret /></BigLabel>
                    </BigTool>
                    <GroupCorner />
                </RibbonGroup>

                <RibbonGroup $w={11} />

                <RibbonGroup $w={122} $pad={10}>
                    <BigTool $w={62}>
                        <IconFind />
                        <BigLabel>查找替换<Caret /></BigLabel>
                    </BigTool>
                    <BigTool $w={36} $ml={6}>
                        <IconPointer s={22} />
                        <BigLabel>选择<Caret /></BigLabel>
                    </BigTool>
                </RibbonGroup>
            </Ribbon>

            <Workspace>
                <EditorPane>
                    <HRuler>
                        <RulerLead>
                            <TabStop />
                            {leadNumbers.map((n) => <RulerCell key={n}>{n}</RulerCell>)}
                        </RulerLead>
                        <RulerBand>
                            <IndentMarker>
                                <svg width="12" height="22" viewBox="0 0 12 22" fill="#fff" stroke="#777">
                                    <path d="M2 .5h8L6 6zM6 6l4 6H2zM2 14h8v7H2z" />
                                </svg>
                            </IndentMarker>
                            {bandNumbers.map((n) => <RulerCell key={n}>{n}</RulerCell>)}
                            <RightMarker>
                                <svg width="10" height="17" viewBox="0 0 10 17" fill="#fff" stroke="#666">
                                    <path d="M5 0v11" fill="none" />
                                    <path d="M5 11l4 5H1z" />
                                </svg>
                            </RightMarker>
                        </RulerBand>
                        <RulerTail>
                            {tailNumbers.map((n) => <RulerCell key={n}>{n}</RulerCell>)}
                        </RulerTail>
                        <RulerToggle>
                            <Ico w={10} h={11} c="#fff" sw={1.4}><rect x="0.500" y="0.500" width="9" height="10" rx="1" fill="#666" stroke="none" /><path d="M2 3h6M3.500 6h3M2 9h6" /></Ico>
                        </RulerToggle>
                    </HRuler>
                    <EditorMain>
                        <VRuler>
                            <VRulerTop>
                                <VSlot $h={18.5}><VNumber>4</VNumber></VSlot>
                                <VSlot />
                                <VSlot><VNumber>2</VNumber></VSlot>
                                <VSlot />
                                <VSlot />
                            </VRulerTop>
                            <VRulerBottom>
                                {vBottom.map((n, i) => <VSlot key={i}>{n && <VNumber>{n}</VNumber>}</VSlot>)}
                            </VRulerBottom>
                        </VRuler>
                        <DocArea>
                            <Page>
                                <CropMark $side="left" />
                                <CropMark $side="right" />
                                <MarginIcon>
                                    <svg width="13" height="15" viewBox="0 0 13 15">
                                        <path d="M0 0h8l5 5v10H0z" fill="#c2d5ee" />
                                        <path d="M2 5h5M2 8h9M2 10.500h6M2 13h9" stroke="#fff" />
                                    </svg>
                                    <Caret $color="#b5b5b5" />
                                </MarginIcon>
                                <HeadingBlock>
                                    {headingLines.map((line) => (
                                        <HeadingLine key={line} $compact={lineEms(line) > 26.4}>{splitDigits(line, HeadingNumber)}</HeadingLine>
                                    ))}
                                </HeadingBlock>
                                <HeadingTail>来越浓。</HeadingTail>
                                {bodyLines.map((line) => (
                                    <BodyLine
                                        key={line.t}
                                        $selected={line.sel}
                                        $first={line.first}
                                        $last={line.last}
                                        $compact={!line.last && lineEms(line.t) > (line.first ? 33 : 35.2)}
                                    >
                                        {splitDigits(line.t, RedNumber)}
                                    </BodyLine>
                                ))}
                            </Page>
                        </DocArea>
                        <Scrollbar>
                            <ScrollArrow $up $color="#888" />
                            <ScrollThumb />
                            <ScrollBottom>
                                <ScrollArrow $color="#777" />
                                <ScrollGap />
                                <ScrollArrow $color="#999" />
                                <ScrollArrow $color="#999" />
                            </ScrollBottom>
                        </Scrollbar>
                    </EditorMain>
                </EditorPane>

                <SidePanel>
                    <PanelHead>
                        <PanelTitle>样式和格式</PanelTitle>
                        <PanelCaret />
                        <PanelClose><IconClose s={11} /></PanelClose>
                    </PanelHead>
                    <StyleSelect>普通(网站)<Caret $color="#555" /></StyleSelect>
                    <PanelButtons>
                        <PanelButton>新样式...</PanelButton>
                        <PanelButton>清除格式</PanelButton>
                    </PanelButtons>
                    <PanelLink>请选择要应用的格式</PanelLink>
                    <StyleList>
                        {styleRows.map((row) => (
                            <StyleRow key={row.digit}>
                                <StyleName $size={row.size} $bold={row.bold}>{row.name}</StyleName>
                                <StyleDigit $gap={row.gap}>{row.digit}</StyleDigit>
                                <ParaMark><IconEnter /></ParaMark>
                            </StyleRow>
                        ))}
                        <StyleRow>
                            <PlainName $size={12} $spaced>默认段落字体</PlainName>
                            <CharMark>a</CharMark>
                        </StyleRow>
                        <StyleRow $selected>
                            <PlainName $size={16}>普通(网站)</PlainName>
                            <ParaMark><IconEnter /></ParaMark>
                        </StyleRow>
                        <StyleRow>
                            <PlainName $size={16}>正文</PlainName>
                            <ParaMark><IconEnter /></ParaMark>
                        </StyleRow>
                    </StyleList>
                    <ShowSelect>显示: 有效样式</ShowSelect>
                </SidePanel>

                <Rail>
                    <RailGrip />
                    {railIcons.map((icon, i) => <RailButton key={i} $active={i === 0}>{icon}</RailButton>)}
                    <RailRule />
                    <RailDots><RailDot /><RailDot /><RailDot /></RailDots>
                </Rail>
            </Workspace>

            <StatusBar>
                <StatusCell $w={52}>页码: 1</StatusCell>
                <StatusCell $w={65}>页面: 1/2</StatusCell>
                <StatusCell $w={151} $pad={10}><span>节: 1/1</span><span>设置值: 2.9厘米</span></StatusCell>
                <StatusCell $w={85} $pad={11} $gap={11}><span>行: 1</span><span>列: 1</span></StatusCell>
                <StatusCell $w={94} $pad={10}>字数: 317/893</StatusCell>
                <StatusCell $w={100} $ruled={false} $gap={6} $pad={12}>
                    <Ico w={14} h={15} c="#888"><path d="M7 1l6 2v5c0 3-3 5-6 6-3-1-6-3-6-6V3zM4.500 7.500L6.500 10l3.500-4" /></Ico>
                    <span>未认证</span>
                </StatusCell>
                <StatusTools>
                    <ViewButton><Ico w={15} h={15}><path d="M1 5V1h4M10 1h4v4M14 10v4h-4M5 14H1v-4M2 2l4 4M13 13l-4-4M13 2L9 6M2 13l4-4" /></Ico></ViewButton>
                    <ViewButton><Ico w={15} h={14}><path d="M1 1h13v12H1zM7.500 1v12" /></Ico></ViewButton>
                    <ViewButton $active><Ico w={13} h={15}><path d="M1 1h8l3 3v10H1zM4 7h5M4 10h5" /></Ico></ViewButton>
                    <ViewButton><Ico w={15} h={15}><path d="M1 1h13v13H1zM4 5h7M4 8h7M4 11h7" /></Ico></ViewButton>
                    <ViewButton><Ico w={15} h={15}><circle cx="7.500" cy="7.500" r="6.500" /><path d="M1 7.500h13M7.500 1c-4 4-4 9 0 13M7.500 1c4 4 4 9 0 13" /></Ico></ViewButton>
                    <ViewButton><Ico w={15} h={15}><circle cx="7.500" cy="8" r="4" /><path d="M1 7c3-5 10-5 13 0" /></Ico></ViewButton>
                    <ZoomValue>80%</ZoomValue>
                    <ZoomTrack />
                    <Ico w={12} h={12}><path d="M6 1v10M1 6h10" /></Ico>
                    <ViewButton><Ico w={14} h={14}><rect x="2" y="2" width="10" height="10" rx="2" strokeDasharray="3 2" /></Ico></ViewButton>
                </StatusTools>
            </StatusBar>

            <ArrowOverlay>
                <svg width="140" height="90" viewBox="0 0 140 90">
                    <path d="M6 79L120 12" stroke="rgba(0,0,0,.22)" strokeWidth="3.500" transform="translate(1 2)" />
                    <path d="M6 79L118 13" stroke="#f01414" strokeWidth="3" strokeLinecap="round" />
                    <path d="M130 7L107 15l6 3 3 7z" fill="#f01414" />
                </svg>
            </ArrowOverlay>
            <Watermark>
                <WatermarkTitle>电脑技术网</WatermarkTitle>
                <WatermarkUrl>www.tagxp.com</WatermarkUrl>
                <TagBox>
                    TAG
                    <TagSwirl>
                        <svg width="34" height="34" viewBox="0 0 34 34" fill="none" stroke="rgba(140,210,200,.55)" strokeWidth="3">
                            <path d="M3 20C5 8 20 2 30 6M8 26c8 6 20 2 22-8-6-3-12-2-14 3" />
                        </svg>
                    </TagSwirl>
                    <TagCaption>极光下载站</TagCaption>
                    <TagSite>www.xz7.com</TagSite>
                </TagBox>
            </Watermark>
            <SogouMark>
                <svg width="34" height="32" viewBox="0 0 34 32">
                    <defs>
                        <linearGradient id="sogouBody" x1="0" y1="0" x2="0" y2="32" gradientUnits="userSpaceOnUse">
                            <stop offset="0.5" stopColor="#f26a2e" />
                            <stop offset="0.5" stopColor="#2a66c8" />
                        </linearGradient>
                        <linearGradient id="sogouStroke" x1="0" y1="0" x2="0" y2="32" gradientUnits="userSpaceOnUse">
                            <stop offset="0.5" stopColor="#ffffff" />
                            <stop offset="0.5" stopColor="#3f86ee" />
                        </linearGradient>
                    </defs>
                    <path d="M6 3l23-3c2 0 3 1 3 3l1 15c0 2-1 3-3 3l-9 2-9 6c-2 1-3 0-3-2L6 22c-2 0-3-1-3-3L3 6c0-2 1-3 3-3z" fill="url(#sogouBody)" />
                    <path d="M26 7c-4-2-14-2-15 2s13 2 13 7-12 5-16 2" fill="none" stroke="url(#sogouStroke)" strokeWidth="3.200" />
                </svg>
            </SogouMark>
            <ImeLabel>中</ImeLabel>
        </Shell>
    );
}
